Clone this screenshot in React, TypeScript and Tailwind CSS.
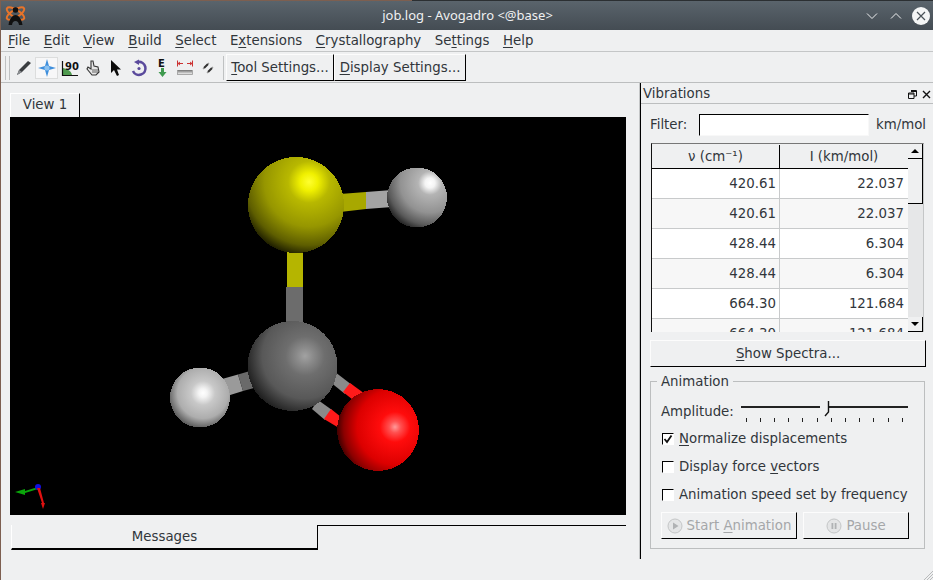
import React from "react";

function Mn({ children }: { children: React.ReactNode }) {
  return <span className="underline underline-offset-2">{children}</span>;
}

function Logo() {
  return (
    <svg width="21" height="20" viewBox="0 0 21 20" className="shrink-0">
      <ellipse cx="10.5" cy="7.5" rx="10" ry="3.8" fill="none" stroke="#e8742a" strokeWidth="2" transform="rotate(32 10.5 7.5)" />
      <ellipse cx="10.5" cy="7.5" rx="10" ry="3.8" fill="none" stroke="#e8742a" strokeWidth="2" transform="rotate(-32 10.5 7.5)" />
      <circle cx="10.5" cy="4" r="2.8" fill="#111" />
      <path d="M3.5 19 C4.5 12 8 9 10.5 9 C13 9 16.5 12 17.5 19 L14 19 C13.5 16 12.5 15 10.5 15 C8.5 15 7.5 16 7 19 Z" fill="#111" />
    </svg>
  );
}

function TitleBar() {
  return (
    <div className="shrink-0">
      <div className="flex h-px">
        <div className="w-[412px] bg-[#7d5f50]" />
        <div className="flex-1 bg-[#2b2f32]" />
      </div>
      <div className="grid h-[29px] grid-cols-[1fr_auto_1fr] items-center bg-gradient-to-b from-[#5a646c] to-[#444c53] pl-[5px] pr-[3px]">
        <Logo />
        <div className="text-[13px] text-[#eff0f1]" style={{ fontFamily: "'Noto Sans', sans-serif" }}>
          job.log - Avogadro &lt;@base&gt;
        </div>
        <div className="flex items-center justify-end gap-[8px]">
          <svg width="16" height="16" viewBox="0 0 16 16">
            <path d="M3 5.5 L8 10.5 L13 5.5" fill="none" stroke="#eff0f1" strokeWidth="1" />
          </svg>
          <svg width="16" height="16" viewBox="0 0 16 16">
            <path d="M3 10.5 L8 5.5 L13 10.5" fill="none" stroke="#eff0f1" strokeWidth="1" />
          </svg>
          <svg width="18" height="18" viewBox="0 0 18 18">
            <circle cx="9" cy="9" r="9" fill="#f4f5f5" />
            <path d="M5 5 L13 13 M13 5 L5 13" stroke="#4a5258" strokeWidth="1.2" />
          </svg>
        </div>
      </div>
    </div>
  );
}

function MenuBar() {
  const items: [string, string, string][] = [
    ["", "F", "ile"],
    ["", "E", "dit"],
    ["", "V", "iew"],
    ["", "B", "uild"],
    ["", "S", "elect"],
    ["E", "x", "tensions"],
    ["", "C", "rystallography"],
    ["Se", "t", "tings"],
    ["", "H", "elp"],
  ];
  return (
    <div className="flex h-[22px] shrink-0 items-center gap-[13.5px] border-b border-[#c4c6c7] pl-[8px]">
      {items.map(([a, b, c]) => (
        <span key={a + b + c}>
          {a}
          <Mn>{b}</Mn>
          {c}
        </span>
      ))}
    </div>
  );
}

function ToolIcons() {
  return (
    <div className="flex items-center">
      <div className="flex h-[22px] w-[23px] items-center justify-center">
        <svg width="18" height="18" viewBox="0 0 18 18">
          <path d="M2 16 L4 11 L13 2 L16 4 L7 13 Z" fill="#3a3d40" />
          <path d="M2 16 L4 11 L7 13 Z" fill="#8a8d90" />
        </svg>
      </div>
      <div className="flex h-[22px] w-[23px] items-center justify-center border border-[#dcdddd] bg-[#f7f7f8]">
        <svg width="18" height="18" viewBox="0 0 18 18">
          <path d="M9 0 L11 7 L18 9 L11 11 L9 18 L7 11 L0 9 L7 7 Z" fill="#3f8fdc" />
          <circle cx="9" cy="9" r="2.6" fill="#8cc2f0" />
        </svg>
      </div>
      <div className="flex h-[22px] w-[23px] items-center justify-center">
        <svg width="18" height="18" viewBox="0 0 18 18">
          <path d="M2 9 L2 16 L11 16 C10 12 7 10 2 9 Z" fill="#4f9a4f" />
          <path d="M1.5 2 L1.5 16.5 L17 16.5" fill="none" stroke="#111" strokeWidth="1.2" />
          <text x="4" y="11" fontSize="10" fontWeight="700" fill="#111" fontFamily="'DejaVu Sans', sans-serif">90</text>
        </svg>
      </div>
      <div className="flex h-[22px] w-[23px] items-center justify-center">
        <svg width="18" height="18" viewBox="0 0 18 18">
          <path d="M7 2 L9 2 L10 7 L14 8 L15 13 L12 16 L8 16 L3 10 L4 8 L7 10 Z" fill="#e6e6e6" stroke="#333" strokeWidth="1.1" />
          <path d="M9 10 V14 M11 10 V14 M13 10 V14" stroke="#555" strokeWidth="0.9" />
        </svg>
      </div>
      <div className="flex h-[22px] w-[23px] items-center justify-center">
        <svg width="18" height="18" viewBox="0 0 18 18">
          <path d="M4 1 L4 14 L7 11 L10 17 L12 16 L10 10.5 L14 10.5 Z" fill="#0b0b0b" />
        </svg>
      </div>
      <div className="flex h-[22px] w-[23px] items-center justify-center">
        <svg width="18" height="18" viewBox="0 0 18 18">
          <path d="M8 3 A6.5 6.5 0 1 1 3 12" fill="none" stroke="#5a4a9c" strokeWidth="2.6" />
          <path d="M4 3 L9 0.5 L9 6 Z" fill="#5a4a9c" />
          <circle cx="9" cy="9.5" r="1.6" fill="#5a4a9c" />
        </svg>
      </div>
      <div className="flex h-[22px] w-[23px] items-center justify-center">
        <svg width="18" height="20" viewBox="0 0 18 20">
          <text x="5" y="9" fontSize="10" fontWeight="700" fill="#111" fontFamily="'DejaVu Sans', sans-serif">E</text>
          <path d="M8 10 H11 V14 H13.5 L9.5 19 L5.5 14 H8 Z" fill="#3f9a4f" />
        </svg>
      </div>
      <div className="flex h-[22px] w-[23px] items-center justify-center">
        <svg width="18" height="18" viewBox="0 0 18 18">
          <path d="M1.5 1.5 V7.5 M16.5 1.5 V7.5" stroke="#c33" strokeWidth="1" />
          <path d="M2 4.5 H7 M11 4.5 H16 M2 4.5 L4 3 M2 4.5 L4 6 M16 4.5 L14 3 M16 4.5 L14 6" stroke="#c33" strokeWidth="1" fill="none" />
          <rect x="1.5" y="11.5" width="15" height="4" fill="#dcdcdc" stroke="#999" strokeWidth="0.8" />
          <path d="M3 11 V13.5 M5 11 V13.5 M7 11 V13.5 M9 11 V13.5 M11 11 V13.5 M13 11 V13.5 M15 11 V13.5" stroke="#444" strokeWidth="0.8" />
        </svg>
      </div>
      <div className="flex h-[22px] w-[23px] items-center justify-center">
        <svg width="18" height="18" viewBox="0 0 18 18">
          <path d="M5 9 L9 5 M9 13 L13 9" stroke="#333" strokeWidth="2" />
          <path d="M9 5 L10 4 M13 9 L14 8 M5 9 L4 10 M9 13 L8 14" stroke="#999" strokeWidth="1.4" />
        </svg>
      </div>
    </div>
  );
}

function QtButton({ className, children }: { className: string; children: React.ReactNode }) {
  return (
    <div className={`flex items-center justify-center border border-r-black border-b-black border-t-[#fcfcfc] border-l-[#fcfcfc] bg-[#eff0f1] ${className}`}>
      {children}
    </div>
  );
}

function ToolBar() {
  return (
    <div className="flex h-[31px] shrink-0 items-center border-b border-[#bcbebf] pl-[5px] pt-px">
      <div className="mr-[2px] h-[24px] w-[5px] border-x border-[#bfc1c2]" />
      <ToolIcons />
      <div className="ml-[4px] mr-[2px] h-[24px] w-px bg-[#bfc1c2]" />
      <QtButton className="h-[27px] w-[108px]">
        <span>
          <Mn>T</Mn>ool Settings...
        </span>
      </QtButton>
      <QtButton className="h-[27px] w-[132px]">
        <span>
          <Mn>D</Mn>isplay Settings...
        </span>
      </QtButton>
    </div>
  );
}

function Sphere({ id, cx, cy, r, fx, fy, stops }: { id: string; cx: number; cy: number; r: number; fx: number; fy: number; stops: [number, string][] }) {
  const R = Math.hypot(cx - fx, cy - fy) + r;
  return (
    <>
      <defs>
        <radialGradient id={id} gradientUnits="userSpaceOnUse" cx={fx} cy={fy} r={R}>
          {stops.map(([o, c]) => (
            <stop key={o} offset={o} stopColor={c} />
          ))}
        </radialGradient>
      </defs>
      <circle cx={cx} cy={cy} r={r} fill={`url(#${id})`} shapeRendering="crispEdges" />
    </>
  );
}

// molecule drawn in the coordinates of the GL view (origin 10,117 of the page)
function Molecule() {
  return (
    <svg width="616" height="398" viewBox="10 117 616 398" className="block">
      {/* S-C bond */}
      <path d="M287 250 H303 V287 H287 Z" fill="#b5b500" />
      <path d="M286 287 H303 V325 H286 Z" fill="#6c6c6c" />
      {/* S-H bond */}
      <path d="M340 194 L366 192 L366 209 L340 212 Z" fill="#a8a800" />
      <path d="M366 192 L392 190 L392 207 L366 209 Z" fill="#a3a3a3" />
      {/* C-H bond */}
      <path d="M222 379 L238 374.5 L243 391 L227 396 Z" fill="#9a9a9a" />
      <path d="M238 374.5 L250 371 L254 388 L243 391 Z" fill="#6a6a6a" />
      {/* C=O bonds */}
      <path d="M335 372 L352 385 L345 394 L329 381 Z" fill="#8a8a8a" />
      <path d="M350 383 L365 394 L357 403 L343 392 Z" fill="#ff1a1a" />
      <path d="M318 400 L332 410 L325 420 L312 409 Z" fill="#8a8a8a" />
      <path d="M331 409 L346 421 L339 428 L324 419 Z" fill="#ff1a1a" />
      <Sphere id="s" cx={296} cy={205} r={48} fx={309} fy={182} stops={[[0, "#ffff30"], [0.12, "#f0f000"], [0.28, "#b8b800"], [0.6, "#969600"], [0.85, "#5e5e00"], [1, "#1e1e00"]]} />
      <Sphere id="h1" cx={417} cy={197.5} r={30} fx={430} fy={183} stops={[[0, "#ffffff"], [0.1, "#f4f4f4"], [0.24, "#b4b4b4"], [0.6, "#929292"], [0.85, "#5a5a5a"], [1, "#222222"]]} />
      <Sphere id="c" cx={292.5} cy={366} r={45} fx={305} fy={356} stops={[[0, "#a2a2a2"], [0.14, "#8a8a8a"], [0.32, "#6e6e6e"], [0.7, "#585858"], [1, "#1e1e1e"]]} />
      <Sphere id="h2" cx={200} cy={397.5} r={30} fx={203} fy={393} stops={[[0, "#ffffff"], [0.12, "#f4f4f4"], [0.34, "#c8c8c8"], [0.72, "#adadad"], [1, "#5a5a5a"]]} />
      <Sphere id="o" cx={378} cy={430} r={41} fx={395} fy={427} stops={[[0, "#ff9a9a"], [0.1, "#ff5050"], [0.26, "#ff0c0c"], [0.65, "#dc0000"], [0.88, "#8c0000"], [1, "#400000"]]} />
      {/* axes */}
      <path d="M38 487 L25 491 L25 489 L15 492 L25 495 L25 493 L38 489 Z" fill="#0aa50a" />
      <circle cx="38" cy="487" r="3" fill="#1010e0" />
      <path d="M37 488 L40 488 L44 503 L45 503 L43 509 L41 503 L42 503 Z" fill="#e01010" />
    </svg>
  );
}

function CentralArea() {
  return (
    <div className="flex w-[640px] shrink-0 flex-col border-r border-[#c4c6c7] pl-[10px] pt-[10px]">
      <div className="flex">
        <div className="flex h-[24px] w-[70px] items-center justify-center border-r border-r-black border-t border-t-white border-l border-l-white pb-px">
          View 1
        </div>
      </div>
      <div className="h-[398px] w-[616px] bg-black">
        <Molecule />
      </div>
      <div className="mt-[10px] flex w-[616px]">
        <div className="ml-px flex h-[25px] w-[307px] items-center justify-center border-b-2 border-b-black border-r border-r-black border-l border-l-white pt-px">
          Messages
        </div>
        <div className="h-px flex-1 bg-black" />
      </div>
    </div>
  );
}

function ScrollBar() {
  return (
    <div className="flex w-[15px] shrink-0 flex-col">
      <div className="flex h-[15px] items-center justify-center border-r border-b border-black bg-[#eff0f1]">
        <div className="h-0 w-0 border-x-[4px] border-b-[4px] border-x-transparent border-b-black" />
      </div>
      <div className="h-[45px] border-r border-b border-black bg-[#eff0f1]" />
      <div className="flex-1 bg-[#e6e7e8]" />
      <div className="flex h-[15px] items-center justify-center border-r border-b border-black bg-[#eff0f1]">
        <div className="h-0 w-0 border-x-[4px] border-t-[4px] border-x-transparent border-t-black" />
      </div>
    </div>
  );
}

const rows = [
  ["420.61", "22.037"],
  ["420.61", "22.037"],
  ["428.44", "6.304"],
  ["428.44", "6.304"],
  ["664.30", "121.684"],
  ["664.30", "121.684"],
];

function VibrationTable() {
  return (
    <div className="mt-[7px] ml-[10px] flex h-[189px] w-[273px] border-l border-t border-r border-[#111] border-r-[#c4c6c7] border-t-[#777]">
      <div className="min-w-0 flex-1 overflow-hidden">
        <div className="grid h-[25px] grid-cols-[128px_128px] border-b border-black pt-px">
          <div className="flex items-center justify-center border-r border-black">ν (cm⁻¹)</div>
          <div className="flex items-center justify-center">I (km/mol)</div>
        </div>
        {rows.map((row, i) => (
          <div key={i} className={`grid h-[30px] grid-cols-[128px_128px] border-b border-[#c8cacb] ${i % 2 ? "bg-[#f7f7f7]" : "bg-white"}`}>
            <div className="flex items-center justify-end border-r border-[#c8cacb] pr-[3px]">{row[0]}</div>
            <div className="flex items-center justify-end pr-[4px]">{row[1]}</div>
          </div>
        ))}
      </div>
      <ScrollBar />
    </div>
  );
}

function Check({ on, children }: { on?: boolean; children: React.ReactNode }) {
  return (
    <div className="flex h-[28px] items-center gap-[5px] pl-px">
      <div className="flex h-[12px] w-[12px] items-center justify-center border border-t-black border-l-black border-r-white border-b-white bg-white">
        {on && (
          <svg width="10" height="10" viewBox="0 0 10 10">
            <path d="M1.5 5 L4 8 L8.5 1.5" fill="none" stroke="#111" strokeWidth="1.8" />
          </svg>
        )}
      </div>
      <span>{children}</span>
    </div>
  );
}

function Slider() {
  const ticks = [0, 1, 2, 3, 4, 5, 6, 7, 8, 9, 10, 11];
  return (
    <div className="relative h-[22px] w-[167px]">
      <div className="absolute left-0 right-0 top-[5px] h-[2px] bg-[#222]" />
      <svg width="11" height="16" viewBox="0 0 11 16" className="absolute left-[78px] top-0">
        <path d="M1 1 H9.5 V11 L6 15 L1 11 Z" fill="#eff0f1" />
        <path d="M9.5 0 V11 L6 15" fill="none" stroke="#111" strokeWidth="1.4" />
      </svg>
      <div className="absolute left-[5px] right-[5px] top-[17px] flex justify-between">
        {ticks.map((t) => (
          <div key={t} className="h-[4px] w-px bg-[#222]" />
        ))}
      </div>
    </div>
  );
}

function AnimationBox() {
  return (
    <div className="relative mt-[14px] ml-[9px] h-[168px] w-[275px] border border-[#bcbebf] px-[10px] pt-[19px]">
      <div className="absolute left-[6px] top-[-8px] bg-[#eff0f1] px-[4px] leading-[16px]">Animation</div>
      <div className="flex items-center gap-[7px]">
        <span className="leading-[20px]">Amplitude:</span>
        <Slider />
      </div>
      <div className="mt-[2px]">
        <Check on>
          <Mn>N</Mn>ormalize displacements
        </Check>
        <Check>
          Display force <Mn>v</Mn>ectors
        </Check>
        <Check>Animation speed set by frequency</Check>
      </div>
      <div className="mt-[3px] flex gap-[6px] text-[#a5a7a9]">
        <QtButton className="h-[27px] w-[136px] gap-[4px]">
          <svg width="16" height="16" viewBox="0 0 16 16">
            <circle cx="8" cy="8" r="7" fill="#e4e5e6" stroke="#c4c6c7" />
            <path d="M6 4.5 L11.5 8 L6 11.5 Z" fill="#b0b2b4" />
          </svg>
          <span>
            Start <Mn>A</Mn>nimation
          </span>
        </QtButton>
        <QtButton className="h-[27px] w-[106px] gap-[4px]">
          <svg width="16" height="16" viewBox="0 0 16 16">
            <circle cx="8" cy="8" r="7" fill="#e4e5e6" stroke="#c4c6c7" />
            <path d="M5.5 5 H7.3 V11 H5.5 Z M8.7 5 H10.5 V11 H8.7 Z" fill="#b0b2b4" />
          </svg>
          <span>Pause</span>
        </QtButton>
      </div>
    </div>
  );
}

function Dock() {
  return (
    <div className="h-[476px] w-[293px] shrink-0 border-l border-black">
      <div className="flex h-[21px] items-center justify-between border-b border-[#bcbebf] px-[2px] pt-[2px]">
        <span>Vibrations</span>
        <div className="flex items-center gap-[5px]">
          <svg width="9" height="9" viewBox="0 0 9 9">
            <path d="M3 .5 H8.5 V6 H6 M.5 3 H6 V8.5 H.5 Z M.5 4 H6 M3 1.5 H8.5" fill="none" stroke="#111" strokeWidth="1" />
          </svg>
          <svg width="9" height="9" viewBox="0 0 9 9">
            <path d="M1 1 L8 8 M8 1 L1 8" stroke="#111" strokeWidth="1.4" />
          </svg>
        </div>
      </div>
      <div className="mt-[10px] flex items-center pl-[9px]">
        <span className="w-[49px]">Filter:</span>
        <div className="h-[22px] w-[170px] border border-t-black border-l-black border-r-[#f8f8f8] border-b-[#f8f8f8] bg-white" />
        <span className="ml-[7px]">km/mol</span>
      </div>
      <VibrationTable />
      <QtButton className="mt-[8px] ml-[9px] h-[27px] w-[276px]">
        <span>
          <Mn>S</Mn>how Spectra...
        </span>
      </QtButton>
      <AnimationBox />
    </div>
  );
}

export default function App() {
  return (
    <div
      className="relative flex h-[580px] w-[933px] flex-col overflow-hidden bg-[#eff0f1] text-[13.33px] text-[#31363b]"
      style={{ fontFamily: "'DejaVu Sans', sans-serif" }}
    >
      <TitleBar />
      <MenuBar />
      <ToolBar />
      <div className="flex">
        <CentralArea />
        <Dock />
      </div>
      {/* window edge and size grip lie over the page */}
      <div className="absolute bottom-0 left-0 top-0 w-px bg-[#7d5f50]" />
      <svg width="10" height="10" viewBox="0 0 10 10" className="absolute bottom-0 right-0">
        <path d="M10 1 L1 10 M10 4 L4 10 M10 7 L7 10" stroke="#b8babb" strokeWidth="1" />
      </svg>
    </div>
  );
}
